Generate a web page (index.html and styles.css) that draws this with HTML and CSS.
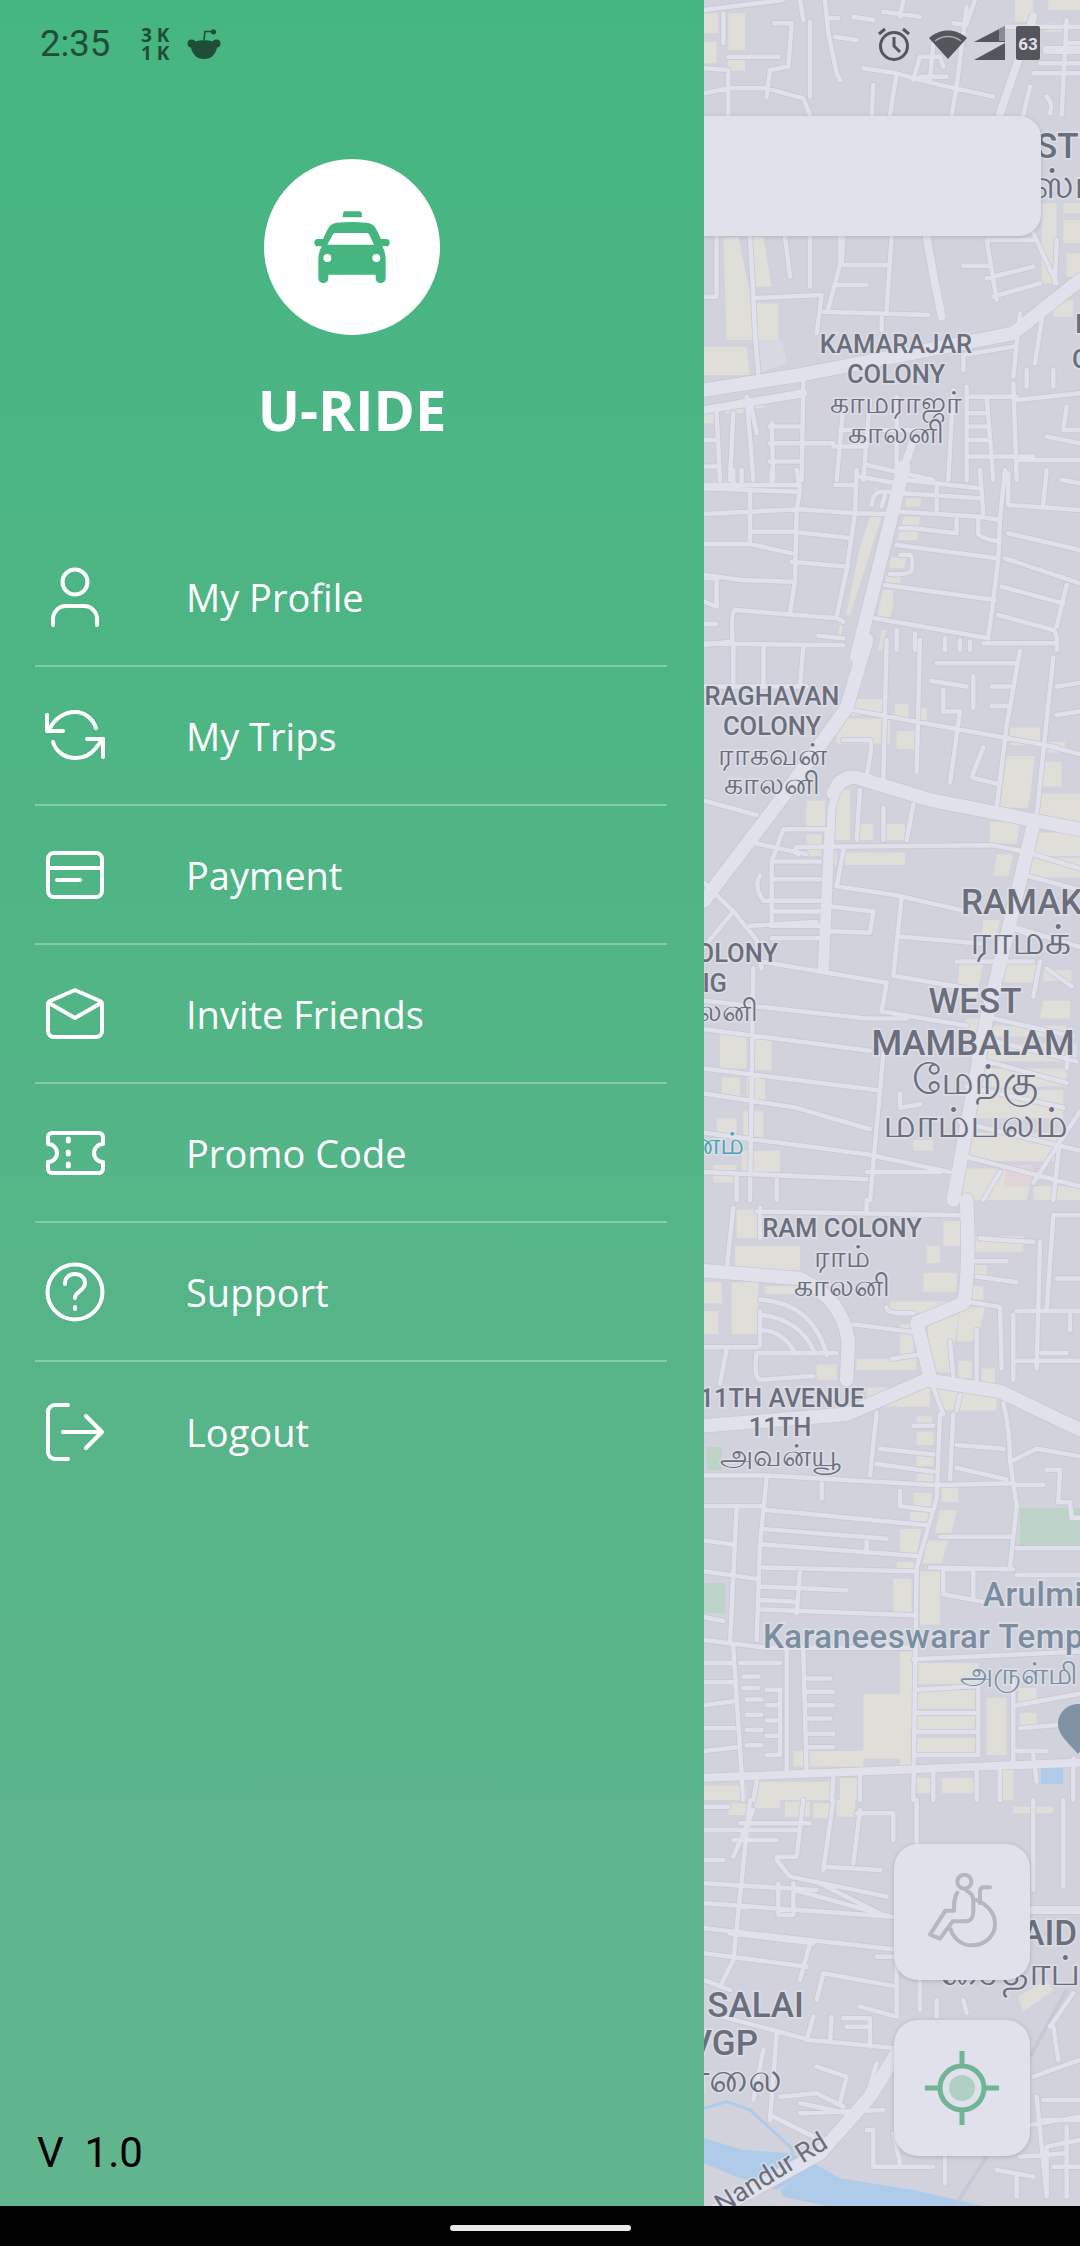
FILE: index.html
```html
<!DOCTYPE html>
<html lang="en">
<head>
<meta charset="utf-8">
<title>U-RIDE</title>
<link rel="stylesheet" href="styles.css">
</head>
<body>
<div class="screen">
  <div class="main">
    <aside class="drawer">
      <div class="status-left">
        <span class="time">2:35</span>
        <span class="netspeed"><span>3 K</span><span>1 K</span></span>
        <svg class="reddit" viewBox="0 0 34 30"><path d="M17 11 18 2.500 25 2.500" fill="none" stroke="#1f4d37" stroke-width="1.6"/><circle cx="26.500" cy="2.800" r="2.600" fill="#1f4d37"/><circle cx="4.500" cy="14.500" r="4" fill="#1f4d37"/><circle cx="29.500" cy="14.500" r="4" fill="#1f4d37"/><path d="M3.500 15C8 10 26 10 30.500 15 30 24 25 30 17 30S4 24 3.500 15Z" fill="#1f4d37"/></svg>
      </div>
      <div class="logo">
        <svg class="taxi" viewBox="6 4 300 270"><path d="M135 32h45q4 0 5 6l1 12h-58l1-12q1-6 6-6Z"/><path fill-rule="evenodd" d="M110 66Q155 62 200 66 222 68 230 88L243 115H258a11 11 0 0 1 0 22H247Q257 155 257 175V233a15 15 0 0 1-30 0V222H85V233a15 15 0 0 1-30 0V175Q55 155 65 137H54a11 11 0 0 1 0-22H69L82 88Q90 68 110 66ZM106 97H202Q206 97 208 102L222 132H82L98 102Q100 97 106 97ZM70 172a12 12 0 1 0 24 0a12 12 0 1 0-24 0ZM217 172a12 12 0 1 0 24 0a12 12 0 1 0-24 0Z"/></svg>
      </div>
      <h1 class="brand">U-RIDE</h1>
      <nav class="menu">
        <a class="row">
          <svg class="ico" viewBox="0 0 64 64"><circle cx="32" cy="17" r="12.500"/><path d="M10 60v-6a13 13 0 0 1 13-13h18a13 13 0 0 1 13 13v6"/></svg>
          <span>My Profile</span>
        </a>
        <a class="row">
          <svg class="ico" viewBox="0 0 64 64"><path d="M4 11v16h16"/><path d="M6 26C11 15 21 8 32 8c10 0 18 7 21 16"/><path d="M10 38c3 10 12 16 23 16 8 0 14-3 19-9l8-10"/><path d="M60 53V35H44"/></svg>
          <span>My Trips</span>
        </a>
        <a class="row">
          <svg class="ico" viewBox="0 0 64 64"><rect x="5" y="10" width="54" height="44" rx="6"/><path d="M5 25h54M14 37h23"/></svg>
          <span>Payment</span>
        </a>
        <a class="row">
          <svg class="ico" viewBox="0 0 64 64"><path d="M5 22Q5 20 7 19L31 8.500Q32 8 33 8.500L57 19Q59 20 59 22V49a6 6 0 0 1-6 6H11a6 6 0 0 1-6-6Z"/><path d="M6 21 32 36 58 21"/></svg>
          <span>Invite Friends</span>
        </a>
        <a class="row">
          <svg class="ico" viewBox="0 0 64 64"><path d="M9 12H56a4 4 0 0 1 4 4V23a9 9 0 0 0 0 18V48a4 4 0 0 1-4 4H9a4 4 0 0 1-4-4V41a9 9 0 0 0 0-18V16a4 4 0 0 1 4-4Z"/><path class="fat" d="M25.300 18v2M25.300 31v2M25.300 43v2"/></svg>
          <span>Promo Code</span>
        </a>
        <a class="row">
          <svg class="ico" viewBox="0 0 64 64"><circle cx="32" cy="32" r="27.500"/><path d="M22 24c0-6 4-10 10-10s10 4 10 9c0 8-10 8-10 15"/><path d="M32 47v2"/></svg>
          <span>Support</span>
        </a>
        <a class="row">
          <svg class="ico" viewBox="0 0 64 64"><path d="M25 5H12a7 7 0 0 0-7 7v40a7 7 0 0 0 7 7h13"/><path d="M20 32h39M43 16l16 16-16 16"/></svg>
          <span>Logout</span>
        </a>
      </nav>
      <div class="version">V&nbsp;&nbsp;1.0</div>
    </aside>
    <section class="map">
      <svg class="mapsvg" viewBox="704 0 376 2206">
        <defs>
          <g id="net-st">
            <g transform="translate(700 0) scale(.3333)"><path d="M12 30L130 15 250 0M300 0L310 60M222 70H275L265 200 210 210 200 290M85 170H235M12 205L85 210V290M12 280L85 265H200L310 295 330 345M85 285V345M330 65V290M375 0L385 100 410 220 420 240M385 55H415M405 110L470 120M460 50L520 60M550 35L660 50M610 0L600 50M490 205L590 220 700 250 880 290M590 220L570 345M520 255L515 345M660 170L640 240M660 170H720L730 200M700 130L690 240M660 230H740M800 20L790 100 770 260 755 345M760 70L800 75M825 0L800 70M920 80H1140M1000 60V130M1100 60L1085 345M1000 220H1140M1040 290Q1060 310 1050 340M1140 130H1100M1140 190H1020M990 260L970 345M70 40V130"/><path d="M12 890H50V710M150 710L160 890 165 1000 175 1120M160 895L360 885M365 885L350 1000M255 710L270 830M330 710V860M385 925L420 795V710M430 710L425 795H570M575 710L560 930M410 855H500M370 935L685 945M545 945V990M860 720L890 900M860 720H1000M860 835L1000 800M790 797H865M1020 850L880 890M1070 720L1065 850M1000 700L1070 850M960 940L940 1130M1030 930L1005 1090M940 1040L790 1065V1110M310 1140L305 1440M50 1240L60 1440M100 1240L90 1440M12 1230L150 1200 170 1300M140 1190L160 1440M210 1280H300M210 1330H400M210 1385H300M215 1270L220 1440M800 1160V1440M860 1190L880 1440M800 1190H950M800 1240H860M800 1280H860M800 1320H860M800 1370H1000M760 1170L745 1440M940 1150L950 1440M950 1200L1140 1180M980 1110V1160M1060 1110V1160M1100 1220L1090 1290H1140M1040 1310L1140 1330M950 1380H1140M12 1320H50M12 1400H50M400 1340H500M420 1290H640M430 1220L410 1440M510 1200L490 1440M590 1190V1440M500 1395L700 1440"/></g>
            <g transform="translate(700 470) scale(.3333)"><path d="M12 55L290 65M12 132L150 125 300 118 470 130 560 132M155 185H280L455 205M12 222H150L275 250M275 275L445 290M12 315L125 330 275 335M290 0L300 60 290 120 285 330 270 430M150 60V220M125 0V40M100 0V45M215 0V45M12 45H300M470 0L465 130 440 300 410 440M405 45H470M480 20L590 40M515 105Q520 65 545 65H570M545 110L555 75M620 30L840 55M610 70L840 85M600 125L840 140 900 150M710 40V120M640 175L770 190V140M640 175H600M835 145V190Q835 205 900 215M590 225L890 265M600 255H630Q640 260 635 300 630 315 570 312M555 345L885 390M840 0L850 130M915 0L900 150 895 265 880 390 865 500M925 10V100M1040 0L1030 100M925 105L1140 120M925 190L1140 240M915 265L1140 340M905 350L1090 400M1100 345L1070 470M895 435L1060 480Q1075 490 1070 540M525 445L865 505M1085 30L1140 40M12 325H50V410L12 395M105 420L410 445 430 455M105 420Q90 425 100 540M12 462H50M355 497L430 505M12 525L90 515M590 480V540M645 490V540M735 505V540M780 510V540M810 515V540M850 520H1070"/></g>
            <g transform="translate(700 640) scale(.3333 .3571)"><path d="M12 10L430 15M100 20V130M190 20V130M310 20L300 130M12 130L320 130M450 195L1070 300M430 280H510Q520 290 500 380M560 0L550 390M710 65H950M695 115L800 130M730 140V200H780L750 400M820 100V190M875 130H930M875 185H930M660 0L650 370M850 300L815 385 900 405M960 30L920 240 890 470M1060 50L1010 490M1070 130L1140 120M1070 210L1140 200M1140 320L1020 290M480 420L470 560M550 470V560M640 460L620 560M12 450L170 490M260 530H380M170 570L320 600M290 580L880 575 960 590M290 580Q280 595 295 600M380 540L360 920M430 590L410 690 590 715 800 760M605 720L580 940M250 530L215 620V800M215 620H360M215 670H360M180 660Q160 690 190 730H360M215 760H360M215 800H360M215 835H360M380 745L520 760 510 820 370 815M595 830L840 850M12 680L100 760 170 840 185 920M100 760L12 860M150 800L350 790M180 900L560 960M560 960L545 1040M580 940L800 975M545 1040L800 1080M12 1010L500 1060H620M12 1090L510 1150M160 920L150 1568M12 1200L530 1260M12 1270L290 1310 510 1370M550 1160L510 1568M12 1380L500 1440 750 1490M500 1490H720M12 1490L500 1510M110 1500V1568M230 1510V1568M600 1270V1310L660 1300M980 600L920 800 1000 830M1000 600L1140 640M980 660L1140 700M1040 920L1115 970M930 800L1140 860M1020 900L1000 1000M770 900H1000M880 1060L1120 1110M870 1120L1130 1180M1110 1090L1100 1200M820 1170L1100 1240M800 1250L1090 1310M780 1350L1140 1430M770 1440L1140 1530M1140 1320L1000 1520M900 1490L850 1568M1080 1400L1060 1568"/></g>
            <g transform="translate(700 1200) scale(.3333 .3827)"><path d="M180 20V100M100 20L80 180M500 0V30M170 30L780 40M575 415L650 405M840 100L1000 110M830 200L950 215M820 160H920M800 265L900 280 905 440M1020 110L1010 440M1060 40L1040 290M1060 40H1140M950 290H1140M940 300V470M1070 205H1140M1110 300V340M950 420H1140M1025 400H1100M180 260Q340 270 380 405M180 300Q300 310 345 400M180 340Q250 340 285 400M180 290V380M12 385H170M170 400Q160 460 180 470L340 460M170 400H410M80 390L60 480M460 325L640 345M560 280Q560 300 640 295M750 370L760 460M830 340V470M700 490L730 560M780 510L770 550M910 530Q930 600 930 680L950 800 930 960M530 555L510 720M540 650L700 665M530 690L700 710M640 590H700M720 560L710 780 650 960M760 560L750 730M770 640L910 650M770 700L920 730M720 745L940 740M12 720H200L700 745M940 680L1010 650 1140 670M1040 705H1080L1075 790H1110L1115 830H1140M940 745H1030M365 740V780M600 760V800L690 810M200 725L180 900 170 1150M110 800L90 1160M12 890L100 900M12 800H190M200 810L680 850M195 860L560 885M190 900L650 930M500 885V920M12 970L170 990M190 960L640 970M180 1010L440 1020M180 1045L290 1050M180 1070L640 1085M300 970L290 1080M650 960L640 1568M720 880L940 880M690 960L940 965M730 970V1030L850 1050M820 970V1040M950 910H1140M950 980H1140M12 1090L70 1100M12 1150L200 1170H630M100 1170L130 1568M260 1180V1500M310 1180L320 1500M320 1250H390M320 1285H400M320 1320H400M320 1355H390M320 1395H400M320 1430H400M120 1210H240M130 1245H175M130 1275H175M140 1305H185M140 1345H185M140 1385H185M140 1425H185M12 1210H100M12 1260H100M12 1320L100 1310M12 1380H105M12 1440L110 1430M200 1280H240V1450H200M200 1320H240M200 1360H240M200 1400H240M640 1200L1140 1180M650 1280L830 1270M650 1340H835M650 1390H835M650 1450H835M835 1270V1450M940 1250V1470M950 1320L1140 1290M960 1380L1100 1370M950 1440H1040M1000 1450L1010 1520M170 1520L160 1568M400 1510L395 1568M480 1500V1568M700 1490V1568M830 1490V1568M900 1490V1568M1120 1460V1568"/></g>
            <g transform="translate(700 1800) scale(.3333)"><path d="M12 20H85M150 0L100 480 60 560M160 30L100 170M230 180L270 230 560 290M12 90H300M120 70H330M310 0L290 170H230M400 0L370 210M480 30L460 190M370 200L540 210M470 40H580V120M12 180H70M100 120H230M235 250V345H280V250M285 270L570 350M350 245L560 350M12 250L350 270M12 310L580 350M12 385L600 450M90 400L340 430M330 430L300 540M370 520L350 600M12 460L320 500M12 540L90 570M530 470H590V640M370 520L590 560M340 650L320 720M395 650L390 725M510 660V740M430 655H510V680H440M30 640L330 720 590 745M230 700L210 960M350 800L440 830 420 910M480 620L590 650M190 750L160 900M530 790L500 890M240 890L350 880 430 920M220 950L340 1010M300 910L440 940M300 940L550 930M500 990H520V1100H700M580 1000L600 1090M735 1070V1150M890 1110L1000 1130M950 1130V1190M1010 890L1040 1190M1000 0V270M1090 0V260M650 0V130M660 540V630M710 600V650M790 600L800 640M1030 900H1140M1030 960H1140M960 980L1140 950M1040 1040L1140 1020M1040 1040V1190M1100 980V1190M1060 1100H1140M960 1070L1100 1060M1000 830L1140 780M1060 680L1075 780M1120 580L1050 680"/></g>
          </g>
          <g id="net-mid">
            <g transform="translate(700 0) scale(.3333)"><path d="M1000 50L900 340M680 710Q700 830 725 950M640 1320L600 1440M12 1230L310 1180M1140 150H1040"/></g>
            <g transform="translate(700 640) scale(.3333 .3571)"><path d="M420 395L395 470 375 920"/></g>
            <g transform="translate(700 1200) scale(.3333 .3827)"><path d="M12 1510L1140 1470"/></g>
            <g transform="translate(700 1800) scale(.3333)"><path d="M990 330H1140M590 750H620"/></g>
          </g>
          <g id="net-rd">
            <g transform="translate(700 0) scale(.3333)"><path d="M12 1170L300 1125 940 1000 1140 840"/></g>
            <g transform="translate(700 470) scale(.3333)"><path d="M612 -10L470 560"/></g>
            <g transform="translate(700 640) scale(.3333 .3571)"><path d="M500 0L440 190 240 450 12 730M400 430Q420 380 470 385L700 450 1140 530M1000 520L860 1060 760 1568"/></g>
            <g transform="translate(700 1200) scale(.3333 .3827)"><path d="M800 0Q810 200 790 270L650 320 690 460M12 185L300 205Q430 260 445 370L440 470M12 590L440 560 680 470 900 500 1140 600"/></g>
            <g transform="translate(700 1800) scale(.3333)"><path d="M590 760L510 890 360 1060 50 1230"/></g>
          </g>
        </defs>
        <rect x="704" y="0" width="376" height="2206" fill="#d1d2dc"/>
        <g class="yellow">
          <g transform="translate(700 0) scale(.3333)"><path d="M12 40H55V100H12ZM85 40H135V150H85ZM12 125H50V190H12ZM85 178H135V212H85ZM70 715L115 710 150 880 165 1020H80ZM145 710H190L215 860H160ZM170 910H235V1020H170ZM12 1040H140L150 1125 12 1125ZM155 1190H190V1225H155ZM12 1240H50V1270H12ZM75 1205H130V1240H75ZM945 0H1000V65H945ZM1045 0H1140V30H1045ZM1030 70H1090V95H1030ZM1025 610H1070V850H1025ZM1090 610H1140V640H1090ZM1090 660H1140V730H1090ZM1100 760H1140V830H1100ZM1060 900H1120V950H1060Z"/><path class="bluish" d="M170 1020H245L262 1090 175 1120Z"/></g>
          <g transform="translate(700 470) scale(.3333)"><path d="M510 140H545L450 435H438L480 230ZM618 85H665L660 110H618ZM612 140H660L650 210H590L600 180ZM572 262H620L612 295H568ZM560 315H605L600 338H555ZM550 360H578L580 400 570 445H530ZM420 465H428L425 495H415ZM545 480H558L545 540H535ZM525 55H535L520 105H515Z"/></g>
          <g transform="translate(700 640) scale(.3333 .3571)"><path d="M460 165H555V210H450ZM585 180H625V225H585ZM650 190H680V235H650ZM410 220H570V290H410ZM590 255H650V305H590ZM930 245H1020V295H930ZM1045 285H1095V315H1045ZM920 325H1005L985 470H900ZM1030 340H1085V410H1020ZM1020 430H1140V510H1010ZM1000 540H1140V605H985ZM985 610H1140V665H975ZM870 510H960L950 570H870ZM890 600H940L925 660H880ZM435 595H615V630H435ZM395 590H410V630H395ZM320 450H375V530H320ZM400 420H450V560H400ZM470 515H520V560H470ZM545 515H615V560H545ZM320 545H365V605H320ZM850 785H900L890 830H845ZM780 900H850L830 1000H770ZM800 1060H860L850 1100H790ZM905 900H1020L1005 960H895ZM1030 925H1115V955H1030ZM1030 1010H1110V1060H1020ZM880 1080H1100V1110H870ZM870 1130H1130V1180H860ZM830 1200H1100V1250H820ZM800 1260H1090V1340H790ZM640 1400H700V1430H640ZM780 1380H1080V1460H770ZM750 1480H1000L980 1568H740ZM1000 1530H1140V1568H1000ZM60 1105H140V1200H60ZM155 1120H215V1205H155ZM65 1225H120V1280H65ZM140 1225H195V1295H140ZM130 1320H190V1400H130ZM50 1340H110V1380H50ZM125 1430H240V1490H125ZM40 1470H110V1520H40Z"/><path class="pink" d="M920 1470H1000L990 1530H910Z"/></g>
          <g transform="translate(700 1200) scale(.3333 .3827)"><path d="M110 25H170V100H110ZM105 120H300V185H105ZM12 215H65V270H12ZM95 215H175V350H95ZM195 225H300V245H195ZM12 290H55V350H12ZM730 55H790V120H730ZM680 120H720V165H680ZM825 95H970V135H825ZM815 170H860V200H815ZM670 190H770V240H670ZM805 225H850V260H805ZM570 265H750V295H570ZM680 280H780L750 450H690ZM600 325H640V420H600ZM470 415H650V445H470ZM350 430H410V470H350ZM780 280H855L830 370H770ZM775 420H815V465H775ZM845 440H885V480H845ZM500 490H690V540H500ZM700 490H890V550H730ZM650 565H695V590H650ZM650 605H700V640H650ZM650 665H700V695H650ZM650 715H700V735H650ZM725 745H775V790H725ZM640 765H695V800H640ZM630 815H690V840H630ZM720 810H770L755 870H705ZM600 860H665L650 925H600ZM680 890H745L725 950H670ZM590 945H640V965H590ZM580 990H635V1080H580ZM660 970H720V1110H660ZM600 1180H640V1480H600ZM490 1290H625V1460H490ZM650 1210H835V1265H650ZM650 1280H830V1330H650ZM650 1345H835V1385H650ZM650 1405H835V1450H650ZM860 1300H920V1450H860ZM960 1340H1010V1385H960ZM955 1275H1010V1315H955ZM280 1440H490V1480H280ZM12 1530H140V1568H12ZM170 1520H400V1568H170ZM420 1510H480V1568H420ZM650 1510H700V1550H650ZM725 1510H830V1550H725ZM890 1480H940V1568H890Z"/></g>
          <g transform="translate(700 1800) scale(.3333)"><path d="M85 10H150V45H85ZM165 0H240V25H165ZM255 5H330V50H255ZM340 10H400V55H340ZM410 0H465V50H410ZM940 20H1060V40H940ZM955 590L1040 540 1060 570 970 635Z"/></g>
        </g>
        <g class="green">
          <rect x="1020" y="1508" width="60" height="40"/><rect x="704" y="1583" width="21" height="30"/><rect x="707" y="1447" width="15" height="23"/>
        </g>
        <g transform="translate(700 1800) scale(.3333)">
          <path class="water" d="M12 1015L130 1050 270 1060 340 1090 420 1135 640 1170 850 1218H380L250 1190 240 1170 280 1140 230 1170 110 1130 12 1090Z"/>
          <path class="stream" d="M12 925L80 905 150 930 270 1040 280 1060"/>
          <path class="rail" d="M1100 570L990 770M860 1070L770 1210"/>
        </g>
        <rect class="water" x="1041" y="1762" width="22" height="22"/>
        <use class="case c-st" href="#net-st"/>
        <use class="case c-mid" href="#net-mid"/>
        <use class="case c-rd" href="#net-rd"/>
        <use class="road r-st" href="#net-st"/>
        <use class="road r-mid" href="#net-mid"/>
        <use class="road r-rd" href="#net-rd"/>
        <g class="lb">
          <text class="m c" x="896" y="353">KAMARAJAR</text>
          <text class="m c" x="896" y="383">COLONY</text>
          <text class="tm c" x="896" y="413">காமராஜர்</text>
          <text class="tm c" x="896" y="443">காலனி</text>
          <text class="l" x="1036" y="158">STI</text>
          <text class="tl" x="1030" y="198">ஸ்ட</text>
          <text class="m" x="1075" y="333">I</text>
          <text class="m" x="1072" y="368">C</text>
          <text class="m c" x="772" y="705">RAGHAVAN</text>
          <text class="m c" x="772" y="735">COLONY</text>
          <text class="tm c" x="772" y="765">ராகவன்</text>
          <text class="tm c" x="772" y="794">காலனி</text>
          <text class="m e" x="778" y="962">COLONY</text>
          <text class="m e" x="727" y="992">LIG</text>
          <text class="tm e" x="758" y="1021">காலனி</text>
          <text class="tm e teal" x="744" y="1154">வனம்</text>
          <text class="l" x="961" y="914">RAMAK</text>
          <text class="tl" x="970" y="954">ராமக்</text>
          <text class="l c" x="975" y="1013">WEST</text>
          <text class="l c" x="973" y="1055">MAMBALAM</text>
          <text class="tl c" x="975" y="1094">மேற்கு</text>
          <text class="tl c" x="975" y="1137">மாம்பலம்</text>
          <text class="m c" x="842" y="1237">RAM COLONY</text>
          <text class="tm c" x="842" y="1267">ராம்</text>
          <text class="tm c" x="842" y="1296">காலனி</text>
          <text class="m c" x="782" y="1407">11TH AVENUE</text>
          <text class="m c" x="780" y="1436">11TH</text>
          <text class="tm c" x="780" y="1466">அவன்யூ</text>
          <text class="p" x="983" y="1606">Arulmi</text>
          <text class="p" x="763" y="1648">Karaneeswarar Temp</text>
          <text class="p2" x="960" y="1684">அருள்மி</text>
          <text class="l" x="1000" y="1945">SAID</text>
          <text class="tl" x="940" y="1985">சைதாப்</text>
          <text class="l e" x="804" y="2017">VGP SALAI</text>
          <text class="l e" x="758" y="2055">VGP</text>
          <text class="tl e" x="782" y="2092">சாலை</text>
          <text class="r" transform="translate(722 2214) rotate(-32)">Nandur Rd</text>
        </g>
        <path class="pin" d="M1078 1704c-11 0-20 9-20 20 0 12 14 22 20 30 6-8 20-18 20-30 0-11-9-20-20-20Z"/>
      </svg>
      <div class="search"></div>
      <div class="status-right">
        <svg class="s-alarm" viewBox="0 0 34 34"><circle cx="17" cy="19" r="13.500"/><path d="M17 10v9l6 6M2 7l6-5M32 7l-6-5"/></svg>
        <svg class="s-wifi" viewBox="0 0 40 32"><path d="M20 32 1 11C12 1 28 1 39 11Z"/><path class="gap" d="M7 14C15 8 25 8 33 14"/></svg>
        <svg class="s-signal" viewBox="0 0 32 34"><path d="M31 0v16H0Z"/><path d="M31 17v17H0Z"/><path class="gap" d="M25 3v12h6V0ZM25 20v4"/></svg>
        <div class="s-batt"><span>63</span></div>
      </div>
      <button class="fab fab-chair"><svg viewBox="582 132 408 408"><circle cx="793" cy="245" r="21"/><path d="M772 278C762 290 762 310 762 332H736L690 404 720 416 758 364H795C812 364 820 352 820 335V300C820 285 812 278 800 272"/><path d="M830 300C868 318 885 345 885 372 885 410 852 436 815 436 785 436 760 415 752 388"/><path d="M840 310V275Q840 262 852 262H870"/></svg></button>
      <button class="fab fab-target"><svg viewBox="0 0 80 80"><circle cx="40" cy="40" r="22"/><circle class="dot" cx="40" cy="40" r="13"/><path d="M40 3v15M40 62v15M3 40h15M62 40h15"/></svg></button>
    </section>
  </div>
  <div class="navbar"><i class="pill"></i></div>
</div>
</body>
</html>
```

FILE: styles.css
```css
* { box-sizing: border-box; }
html, body { margin: 0; padding: 0; }
body { background: #000; font-family: "Open Sans", sans-serif; }
.screen { width: 1080px; height: 2246px; display: flex; flex-direction: column; overflow: hidden; }
.main { flex: 1; display: flex; min-height: 0; }
.drawer { width: 704px; flex: none; display: flex; flex-direction: column; align-items: center; background: linear-gradient(180deg, #46b681 0%, #50b585 40%, #61b58f 100%); position: relative; z-index: 2; }
.status-left { align-self: stretch; height: 88px; padding-left: 40px; display: flex; align-items: center; color: #1f4d37; }
.time { font: 400 36.500px/1 Roboto, sans-serif; width: 101px; }
.netspeed { display: flex; flex-direction: column; font: 700 19px/18px "Open Sans", sans-serif; width: 46px; white-space: pre; }
.reddit { width: 34px; height: 30px; }
.logo { margin-top: 71px; width: 176px; height: 176px; border-radius: 50%; background: #fff; display: flex; align-items: center; justify-content: center; flex: none; }
.taxi { width: 100px; height: 90px; fill: #46b681; }
.brand { margin: 39px 0 0; color: #fff; font: 700 56px/70px "Open Sans", sans-serif; }
.menu { align-self: stretch; margin: 84px 37px 0 35px; display: flex; flex-direction: column; }
.row { height: 139px; display: flex; align-items: center; border-bottom: 2px solid rgba(255,255,255,.3); padding-left: 8px; color: #fff; font: 400 38px/1 "Open Sans", sans-serif; }
.row:last-child { border-bottom: 0; }
.ico { width: 64px; height: 64px; margin-right: 79px; fill: none; stroke: #fff; stroke-width: 4; stroke-linecap: round; stroke-linejoin: round; flex: none; }
.ico .fat { stroke-width: 5; }
.version { margin-top: auto; align-self: flex-start; margin-left: 37px; margin-bottom: 29px; font: 400 42px/48px Roboto, sans-serif; color: #000; }
.map { flex: 1; position: relative; overflow: hidden; }
.mapsvg { display: block; width: 376px; height: 2206px; }
.yellow { fill: #dfded9; }
.yellow .bluish { fill: #d7d9e3; }
.yellow .pink { fill: #e2d5da; }
.green { fill: #bdd3c8; }
.water { fill: #aecbea; }
.stream { fill: none; stroke: #aecbea; stroke-width: 3; vector-effect: non-scaling-stroke; }
.rail { fill: none; stroke: #c7c8d3; stroke-width: 4; vector-effect: non-scaling-stroke; }
#net-st path, #net-mid path, #net-rd path { vector-effect: non-scaling-stroke; fill: none; stroke-linecap: round; stroke-linejoin: round; }
.case { stroke: #c7c8d3; }
.road { stroke: #e0e1ea; }
.c-st { stroke-width: 6; }
.c-mid { stroke-width: 9.500; }
.c-rd { stroke-width: 15; }
.r-st { stroke-width: 4.500; }
.r-mid { stroke-width: 8; }
.r-rd { stroke-width: 13.500; }
.lb text { fill: #6b6e7b; stroke: #e0e1ea; stroke-width: 3px; stroke-opacity: .8; paint-order: stroke; font-family: Roboto, "Noto Sans", sans-serif; font-weight: 500; }
.lb .m { font-size: 25.500px; }
.lb .tm { font-size: 30px; font-weight: 400; }
.lb .l { font-size: 35px; }
.lb .tl { font-size: 41px; font-weight: 400; }
.lb .c { text-anchor: middle; }
.lb .e { text-anchor: end; }
.lb .p { font-size: 33px; fill: #7a8ea0; letter-spacing: .5px; }
.lb .p2 { font-size: 30px; font-weight: 400; fill: #7a8ea0; }
.lb .teal { fill: #4aa3b8; }
.lb .r { font-size: 27px; font-weight: 400; }
.pin { fill: #8093a5; }
.search { position: absolute; left: 0; top: 116px; width: 337px; height: 120px; background: #e0e1ea; border-radius: 0 22px 22px 0; box-shadow: 0 1px 4px rgba(90,90,100,.25); }
.status-right { position: absolute; left: 0; right: 0; top: 0; }
.status-right svg, .s-batt { position: absolute; }
.s-alarm { left: 173px; top: 27px; width: 34px; height: 34px; fill: none; stroke: #55565c; stroke-width: 3; }
.s-wifi { left: 224px; top: 27px; width: 40px; height: 32px; fill: #55565c; }
.s-wifi .gap { fill: none; stroke: #a9aab3; stroke-width: 1.500; }
.s-signal { left: 270px; top: 26px; width: 32px; height: 34px; fill: #55565c; }
.s-signal .gap { fill: #8b8c94; }
.s-batt { left: 312px; top: 26px; width: 24px; height: 34px; background: #55565c; border-radius: 2px; color: #e0e1ea; font: 700 17px/36px Roboto, sans-serif; text-align: center; }
.fab { position: absolute; left: 190px; width: 136px; height: 136px; border: 0; padding: 0; border-radius: 24px; background: #e0e1ea; box-shadow: 0 1px 4px rgba(90,90,100,.3); display: flex; align-items: center; justify-content: center; }
.fab-chair { top: 1844px; }
.fab-chair svg { width: 136px; height: 136px; fill: none; stroke: #b5b6bf; stroke-width: 12; stroke-linejoin: round; stroke-linecap: round; }
.fab-target { top: 2020px; }
.fab-target svg { width: 80px; height: 80px; fill: none; stroke: #6fb596; stroke-width: 5; }
.fab-target .dot { fill: #b0d0c5; stroke: none; }
.navbar { height: 40px; flex: none; background: #000; display: flex; justify-content: center; align-items: flex-start; padding-top: 19px; }
.pill { display: block; width: 181px; height: 6px; border-radius: 3px; background: #e8e8e8; }
```
